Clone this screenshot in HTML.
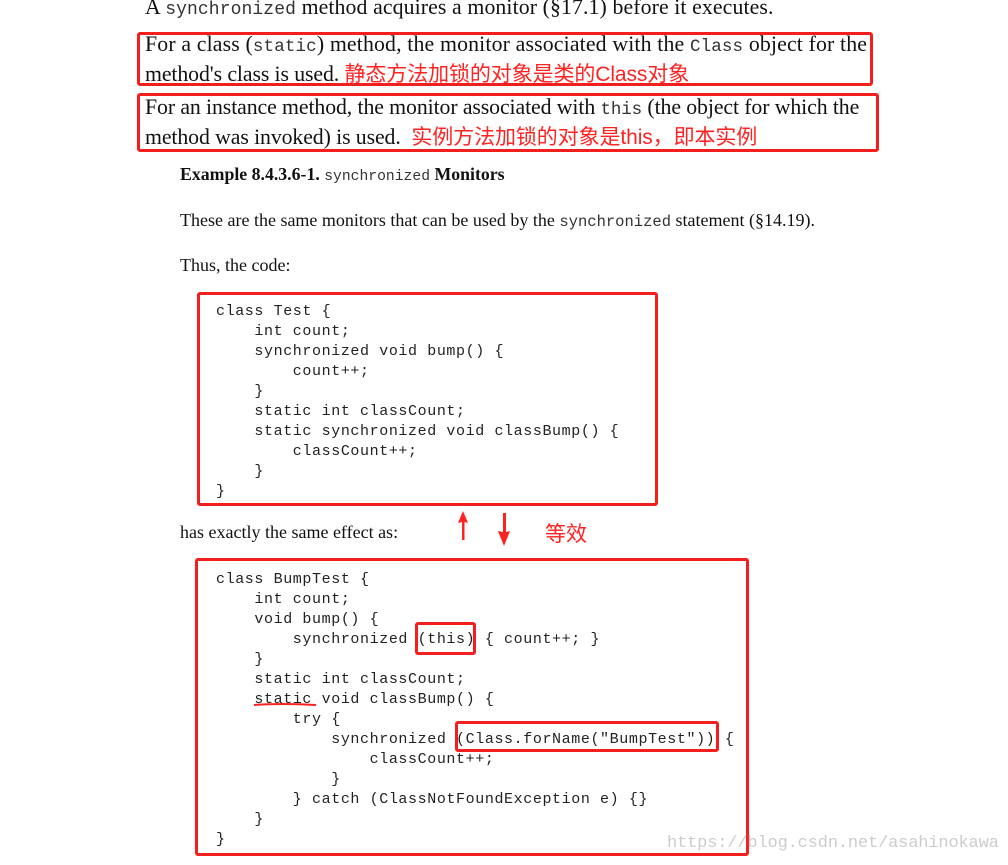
<!DOCTYPE html>
<html><head><meta charset="utf-8"><style>
body{margin:0;width:1008px;height:865px;background:#fff;position:relative;overflow:hidden;font-family:"Liberation Serif",serif;color:#111}
.a{position:absolute;white-space:pre}
.s{font-size:21.8px;letter-spacing:-0.1px}
.m{font-family:"Liberation Mono",monospace;color:#333}
.cn{font-family:"Liberation Sans","Noto Sans CJK SC",sans-serif;color:#f22;font-size:21px}
.box{position:absolute;border:3px solid #f21f1f;border-radius:3px;box-sizing:border-box}
.code{position:absolute;font-family:"Liberation Mono",monospace;font-size:15px;line-height:20px;color:#222;white-space:pre;letter-spacing:0.6px}
</style></head><body>
<div class="a s" style="left:145px;top:-5px;letter-spacing:0.1px">A <span class="m" style="font-size:18px">synchronized</span> method acquires a monitor (§17.1) before it executes.</div>
<div class="box" style="left:137px;top:32px;width:736px;height:54px"></div>
<div class="a s" style="left:145px;top:32px;letter-spacing:0.15px">For a class (<span class="m" style="font-size:17.5px">static</span>) method, the monitor associated with the <span class="m" style="font-size:17.5px">Class</span> object for the</div>
<div class="a s" style="left:145px;top:58px">method's class is used. <span class="cn">静态方法加锁的对象是类的Class对象</span></div>
<div class="box" style="left:137px;top:93px;width:742px;height:59px"></div>
<div class="a s" style="left:145px;top:95px">For an instance method, the monitor associated with <span class="m" style="font-size:17.5px">this</span> (the object for which the</div>
<div class="a s" style="left:145px;top:121px">method was invoked) is used.  <span class="cn">实例方法加锁的对象是this，即本实例</span></div>
<div class="a" style="left:180px;top:164px;font-size:17.8px;font-weight:bold">Example 8.4.3.6-1. <span class="m" style="font-size:14.7px;font-weight:normal">synchronized</span> Monitors</div>
<div class="a" style="left:180px;top:210px;font-size:18px">These are the same monitors that can be used by the <span class="m" style="font-size:15.5px">synchronized</span> statement (§14.19).</div>
<div class="a" style="left:180px;top:255px;font-size:18px">Thus, the code:</div>
<div class="box" style="left:197px;top:292px;width:461px;height:214px"></div>
<div class="code" style="left:216px;top:302px">class Test {
    int count;
    synchronized void bump() {
        count++;
    }
    static int classCount;
    static synchronized void classBump() {
        classCount++;
    }
}</div>
<div class="a" style="left:180px;top:522px;font-size:18px">has exactly the same effect as:</div>
<svg class="a" style="left:455px;top:508px" width="60" height="40"><path d="M8 3 L3 15 L7 14 L7 32 L9.5 32 L9.5 14 L13 15 Z" fill="#f22"/><path d="M48 5 L48 24 L43 23 L49 38 L55 23 L51 24 L51 5Z" fill="#f22"/></svg>
<div class="a" style="left:545px;top:518px;font-family:'Noto Sans CJK SC',sans-serif;color:#f22;font-size:21px">等效</div>
<div class="box" style="left:195px;top:558px;width:554px;height:298px"></div>
<div class="code" style="left:216px;top:570px">class BumpTest {
    int count;
    void bump() {
        synchronized (this) { count++; }
    }
    static int classCount;
    static void classBump() {
        try {
            synchronized (Class.forName("BumpTest")) {
                classCount++;
            }
        } catch (ClassNotFoundException e) {}
    }
}</div>
<div class="box" style="left:415px;top:622px;width:61px;height:33px"></div>
<div class="box" style="left:455px;top:721px;width:264px;height:31px"></div>
<svg class="a" style="left:252px;top:700px" width="70" height="10"><path d="M2 5 Q30 3 64 5" stroke="#f22" stroke-width="2" fill="none"/></svg>
<div class="a" style="left:667px;top:834px;font-family:'Liberation Mono',monospace;font-size:17px;letter-spacing:-0.15px;color:#ccc">https://blog.csdn.net/asahinokawa</div>
</body></html>
